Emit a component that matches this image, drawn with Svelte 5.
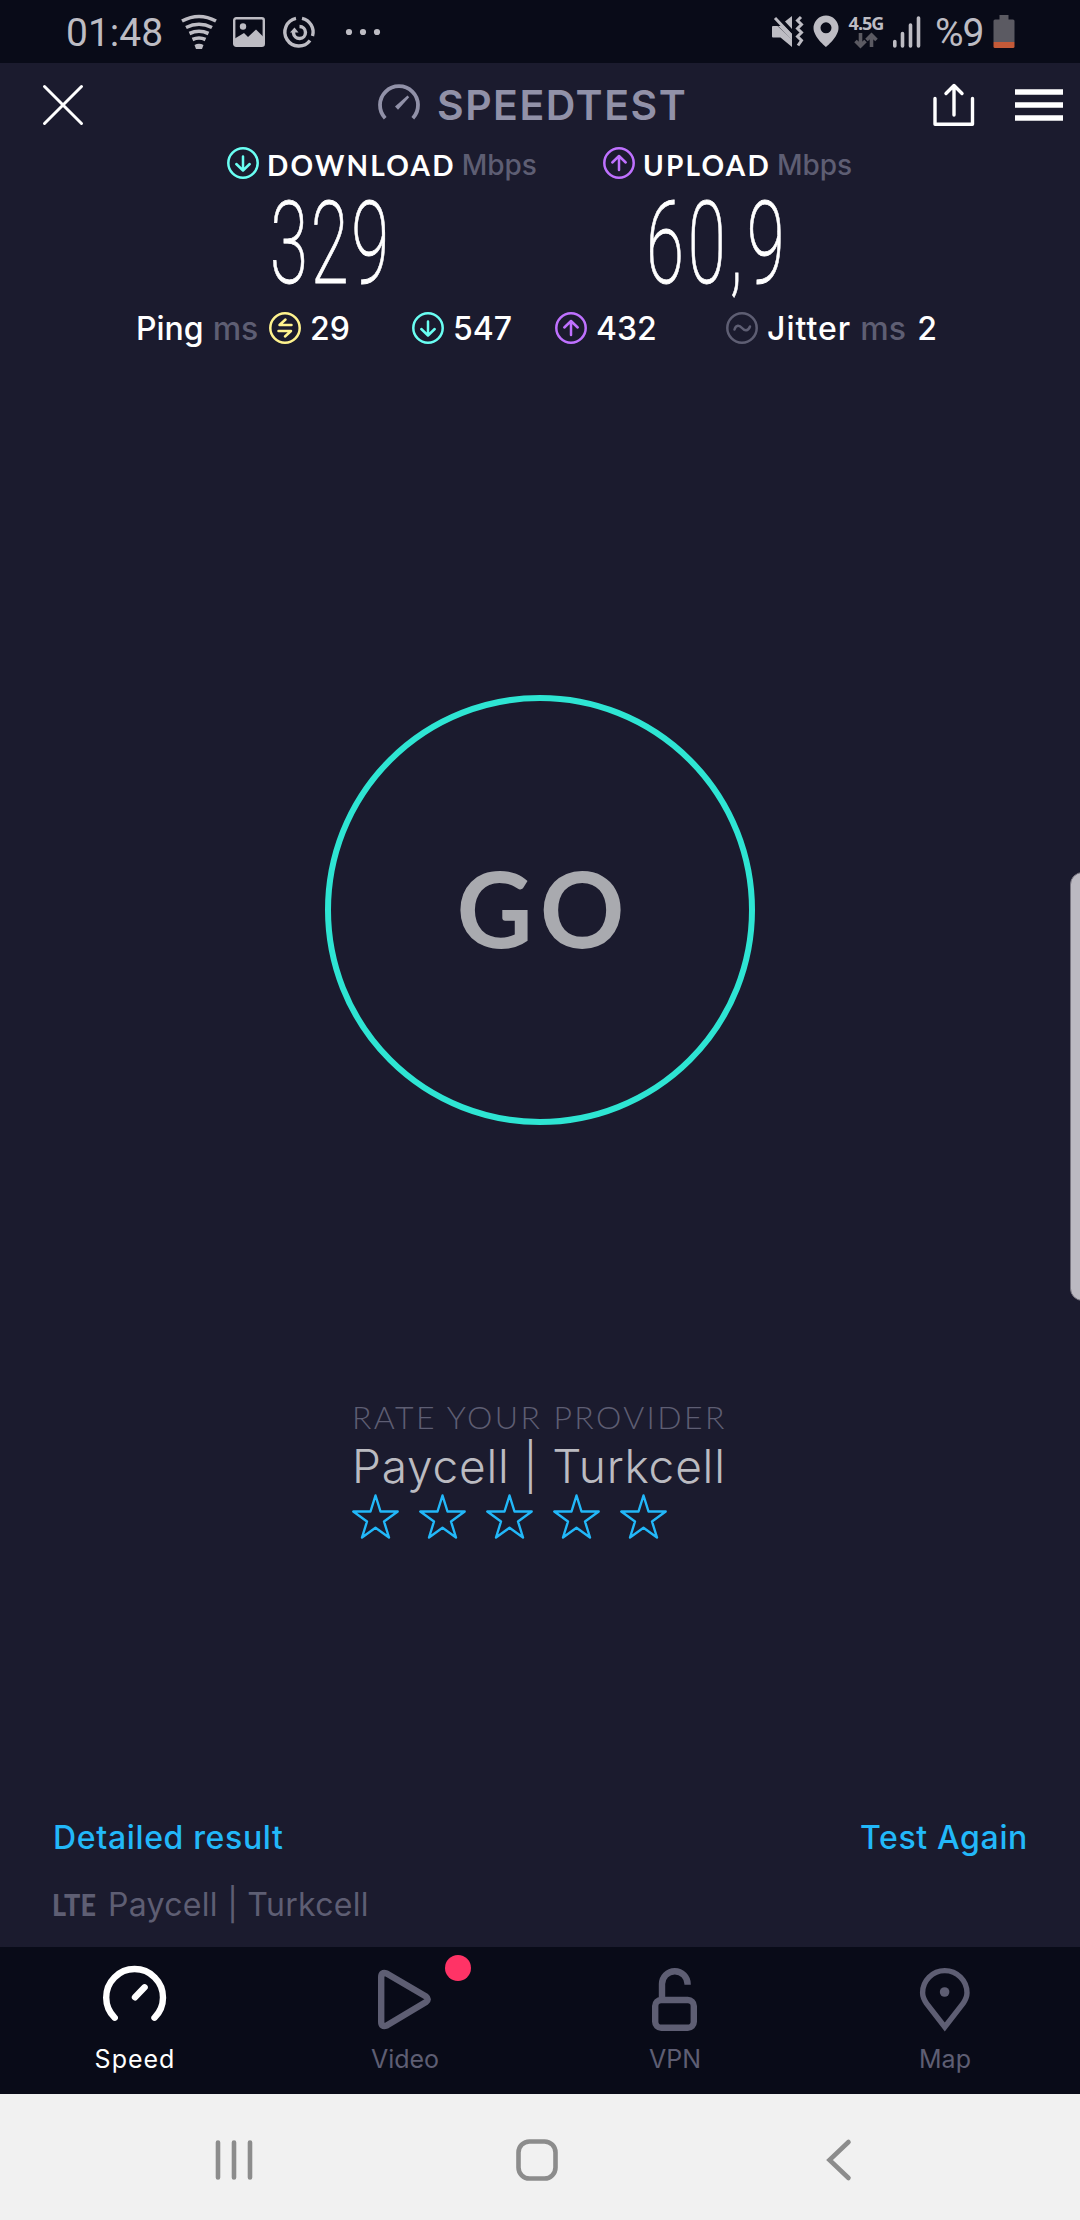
<script lang="ts">
  const stars = [1, 2, 3, 4, 5];

  const tabs = [
    { id: "speed", label: "Speed", active: true, badge: false },
    { id: "video", label: "Video", active: false, badge: true },
    { id: "vpn", label: "VPN", active: false, badge: false },
    { id: "map", label: "Map", active: false, badge: false },
  ];
</script>

{#snippet ring(kind: string)}
  <svg class="ring {kind}" viewBox="0 0 32 32">
    <circle cx="16" cy="16" r="14.7" />
    {#if kind === "down"}
      <path d="M16 9.500v13.500M9.300 17l6.700 6.500 6.700-6.500" />
    {:else if kind === "up"}
      <path d="M16 23V9M9.300 15.500L16 9l6.700 6.500" />
    {:else if kind === "ping"}
      <path d="M22.500 13H10.500l6-5.500M9.500 19H22l-6 5.500" />
    {:else}
      <path d="M8.500 17.500c1.500-5 5-4.500 7.500-1.500s6 3.500 8-1.500" />
    {/if}
  </svg>
{/snippet}

<div class="screen">
  <div class="status-bar">
    <span class="clock">01:48</span>
    <svg class="wifi" viewBox="0 0 36 34">
      <path d="M1 6Q18-3 35 6M5 12.500q13-6.500 26 0M8.500 18.500q9.500-4.500 19 0M11.500 24.500q6.500-3 13 0" />
      <path d="M13.500 30q4.500-2.500 9 0l-1.500 4h-6z" class="solid" />
    </svg>
    <svg class="photo" viewBox="0 0 32 30">
      <rect x="1.200" y="1.200" width="29.600" height="27.600" rx="2" />
      <circle cx="10" cy="9.500" r="3.200" />
      <path d="M1 22l10-6 4 4 8-7.500 8 8V29H1z" />
    </svg>
    <svg class="sync" viewBox="0 0 32 32">
      <path d="M13 2.300A14 14 0 1 0 27 24.500M19 2.300A14 14 0 0 1 29.500 20" />
      <path d="M16.500 10.500a6 6 0 1 1-6 6.500V15" />
      <path d="M7 16.500l4.500-5 4 5z" class="solid" />
    </svg>
    <svg class="more" viewBox="0 0 36 8">
      <circle cx="4" cy="4" r="3.100" /><circle cx="18" cy="4" r="3.100" /><circle cx="32" cy="4" r="3.100" />
    </svg>
    <div class="status-right">
      <svg class="mute" viewBox="0 0 32 33">
        <path d="M0 12q0-1 1-1h4.500L20 24.500V32L8.500 22.500H1q-1 0-1-1zM13 6.500L20 1v13z" class="solid" />
        <path d="M6 11h6l8 8v6z" class="solid" />
        <path d="M3 3l16 17M29 2l-3.500 3.500 4 4-4 4 4 4-4 4 4 4-3.500 5" />
      </svg>
      <svg class="pin" viewBox="0 0 26 33">
        <path fill-rule="evenodd" d="M13 .500A12.500 12.500 0 0 0 .500 13C.500 22 13 32 13 32s12.500-10 12.500-19A12.500 12.500 0 0 0 13 .500zM13 7.300a5.500 5.500 0 1 1 0 11 5.500 5.500 0 0 1 0-11z" />
      </svg>
      <div class="network">
        <span>4.5G</span>
        <svg viewBox="0 0 24 15">
          <path d="M6.500 0v12M1.500 8l5 5 5-5M17.500 14V2M12.500 7l5-5 5 5" />
        </svg>
      </div>
      <svg class="signal" viewBox="0 0 28 32">
        <path d="M1.800 25.500v4.500M9.500 17.500v12.500M17.500 9v21M25.500 2v28" />
      </svg>
      <span class="percent">%9</span>
      <svg class="battery" viewBox="0 0 22 33">
        <path d="M6.500 0h9v4.500H20q1.500 0 1.500 1.500V27H.500V6q0-1.500 1.500-1.500h4.500z" />
        <path d="M.500 27h21v4.500q0 1.500-1.500 1.500H2Q.500 33 .500 31.500z" class="charge" />
      </svg>
    </div>
  </div>

  <header class="app-header">
    <svg class="close" viewBox="0 0 40 40"><path d="M1.500 1.500l37 37M38.500 1.500l-37 37" /></svg>
    <div class="brand">
      <svg viewBox="0 0 42 36">
        <path d="M7.200 34.200A19 19 0 1 1 34.800 34.200" />
        <path d="M17 22.500L29.500 11.500l1.700 1.700L20 25.800z" class="needle" />
      </svg>
      <span>SPEEDTEST</span>
    </div>
    <svg class="share" viewBox="0 0 42 42">
      <path d="M2 14.500V40.300h37.500V14.500M21 31V2.500M13 9.500l8-8 8 8" />
    </svg>
    <svg class="menu" viewBox="0 0 48 32">
      <path d="M0 3h48M0 16h48M0 29h48" />
    </svg>
  </header>

  <section class="results">
    <div class="result download">
      <div class="result-label">
        {@render ring("down")}
        <strong>DOWNLOAD</strong>
        <span class="unit">Mbps</span>
      </div>
      <div class="result-value">329</div>
    </div>
    <div class="result upload">
      <div class="result-label">
        {@render ring("up")}
        <strong>UPLOAD</strong>
        <span class="unit">Mbps</span>
      </div>
      <div class="result-value decimal">60,9</div>
    </div>
  </section>

  <section class="latency">
    <div class="metric ping-label"><strong>Ping</strong><span class="unit">ms</span></div>
    <div class="metric idle">{@render ring("ping")}<strong>29</strong></div>
    <div class="metric loaded-down">{@render ring("down")}<strong>547</strong></div>
    <div class="metric loaded-up">{@render ring("up")}<strong>432</strong></div>
    <div class="metric jitter-metric">
      {@render ring("jitter")}<strong class="jitter-name">Jitter</strong><span class="unit">ms</span><strong>2</strong>
    </div>
  </section>

  <main class="stage">
    <button class="go"><span>GO</span></button>
    <div class="edge-handle"></div>
  </main>

  <section class="rating">
    <div class="rate-title">RATE YOUR PROVIDER</div>
    <div class="provider">Paycell | Turkcell</div>
    <div class="stars">
      {#each stars as star (star)}
        <svg viewBox="0 0 47 45">
          <path d="M23.500 1.500l5 16H45.700L32 27.500l5 16-13.500-9.700L10 43.500l5-16L1.300 17.500h17.200z" />
        </svg>
      {/each}
    </div>
  </section>

  <section class="actions">
    <span class="detail-link">Detailed result</span>
    <span class="again-link">Test Again</span>
  </section>

  <section class="connection">
    <span class="lte">LTE</span>
    <span class="carrier">Paycell | Turkcell</span>
  </section>

  <nav class="tab-bar">
    {#each tabs as tab (tab.id)}
      <div class="tab {tab.id}" class:active={tab.active}>
        <svg viewBox="0 0 70 70">
          {#if tab.id === "speed"}
            <path d="M14.700 56.700A28.400 28.400 0 1 1 54.500 56.700M35 36.300l9.600-10" />
          {:else if tab.id === "video"}
            <path d="M11.200 16V61q0 5.500 5.500 3.500L56 41q3.500-2.700 0-5.400L16.700 12.500q-5.500-2-5.500 3.500z" />
          {:else if tab.id === "vpn"}
            <path class="square" d="M22 37V23a12.800 12.800 0 0 1 25.600 0v.700" />
            <rect x="15.200" y="39" width="38.600" height="27.800" rx="6" />
          {:else}
            <path class="outline" d="M34.800 66L16.500 42.500C13.500 38 12.600 35 12.600 31.800a22.200 22.200 0 0 1 44.400 0c0 3.200-.900 6.200-3.900 10.700z" />
            <circle class="dot" cx="34.600" cy="31" r="4.800" />
          {/if}
        </svg>
        <span>{tab.label}</span>
        {#if tab.badge}<i class="badge"></i>{/if}
      </div>
    {/each}
  </nav>

  <div class="system-nav">
    <svg viewBox="0 0 46 46"><path class="recent" d="M7 5.500v35M23 5.500v35M39 5.500v35" /></svg>
    <svg viewBox="0 0 46 46"><rect x="4.500" y="4.500" width="37" height="37" rx="11" /></svg>
    <svg viewBox="0 0 46 46"><path d="M32.500 5l-19 18 19 18" /></svg>
  </div>
</div>

<style>
  :global(body) {
    margin: 0;
    background: #1b1b2e;
  }

  .screen {
    width: 1080px;
    height: 2220px;
    display: flex;
    flex-direction: column;
    overflow: hidden;
    background: #1b1b2e;
    color: #fff;
    font-family: Inter, "Open Sans", sans-serif;
    white-space: nowrap;
  }

  svg {
    display: block;
    flex: none;
    overflow: visible;
    fill: none;
    stroke: currentColor;
  }

  strong {
    font-weight: 500;
  }

  .unit {
    color: #5e5e73;
    font-weight: 500;
  }

  .status-bar {
    height: 63px;
    box-sizing: border-box;
    flex: none;
    display: flex;
    align-items: center;
    padding: 0 65px 0 66px;
    background: #090b18;
    color: #bdbcc3;
    font-family: Roboto, sans-serif;
  }

  .status-bar .solid {
    fill: currentColor;
    stroke: none;
  }

  .clock {
    width: 115px;
    font-size: 39px;
    padding-top: 3px;
  }

  .wifi {
    width: 36px;
    height: 34px;
    stroke-width: 3.6;
  }

  .photo {
    width: 32px;
    height: 30px;
    margin-left: 16px;
    stroke-width: 2.4;
  }

  .photo circle,
  .photo path {
    fill: currentColor;
    stroke: none;
  }

  .sync {
    width: 32px;
    height: 32px;
    margin-left: 18px;
    stroke-width: 3.4;
  }

  .more {
    width: 36px;
    height: 8px;
    margin-left: 30px;
    fill: currentColor;
    stroke: none;
  }

  .status-right {
    margin-left: auto;
    display: flex;
    align-items: center;
  }

  .mute {
    width: 32px;
    height: 33px;
    stroke-width: 3;
  }

  .pin {
    width: 26px;
    height: 33px;
    margin-left: 9px;
    fill: currentColor;
    stroke: none;
  }

  .network {
    width: 36px;
    margin-left: 9px;
    display: flex;
    flex-direction: column;
    align-items: center;
    gap: 2px;
    font-family: "Open Sans", sans-serif;
    font-size: 18px;
    font-weight: 700;
    line-height: 16px;
    letter-spacing: -1px;
  }

  .network svg {
    width: 24px;
    height: 15px;
    color: #5b5a62;
    stroke-width: 3.6;
  }

  .signal {
    width: 28px;
    height: 32px;
    margin-left: 9px;
    stroke-width: 3.6;
    stroke-linecap: round;
  }

  .percent {
    width: 59px;
    margin-left: 14px;
    padding-top: 3px;
    font-size: 39px;
    letter-spacing: -1px;
  }

  .battery {
    width: 22px;
    height: 33px;
    margin-left: -1px;
    fill: #5b5a62;
    stroke: none;
  }

  .charge {
    fill: #c45a38;
  }

  .app-header {
    height: 84px;
    flex: none;
    display: grid;
    grid-template-columns: 40px 1fr 42px 48px;
    column-gap: 40px;
    align-items: center;
    padding: 0 17px 0 43px;
    box-sizing: border-box;
  }

  .close {
    width: 40px;
    height: 40px;
    stroke-width: 3;
    stroke-linecap: round;
  }

  .brand {
    display: flex;
    align-items: center;
    padding-left: 255px;
    color: #9191a8;
    font-size: 41px;
    font-weight: 600;
    letter-spacing: 1.5px;
  }

  .brand svg {
    width: 42px;
    height: 36px;
    margin-right: 17px;
    margin-top: -6px;
    stroke-width: 3.8;
  }

  .brand .needle {
    fill: currentColor;
    stroke: none;
  }

  .share {
    width: 42px;
    height: 42px;
    stroke-width: 3.4;
    stroke-linecap: round;
    stroke-linejoin: round;
  }

  .menu {
    width: 48px;
    height: 32px;
    stroke-width: 5.6;
  }

  .ring {
    width: 32px;
    height: 32px;
    stroke-width: 2.5;
    stroke-linecap: round;
    stroke-linejoin: round;
  }

  .down {
    color: #6afff3;
  }

  .up {
    color: #bf71ff;
  }

  .ping {
    color: #fff38e;
  }

  .jitter {
    color: #5e5e73;
  }

  .results {
    height: 157px;
    flex: none;
    display: grid;
    grid-template-columns: 376px 1fr;
    padding-left: 227px;
  }

  .result-label {
    height: 32px;
    display: flex;
    align-items: center;
    font-size: 28px;
    line-height: 32px;
  }

  .result-label strong {
    margin: 3px 0 0 8px;
    font-family: Lato, sans-serif;
    font-weight: 700;
    letter-spacing: 2.2px;
  }

  .result-label .unit {
    margin: 3px 0 0 6px;
  }

  .result-value {
    width: 200px;
    margin: 15px 0 0 43px;
    font-family: Roboto, sans-serif;
    font-size: 115px;
    font-weight: 200;
    line-height: 100px;
    letter-spacing: 4.5px;
    transform: scaleX(0.6);
    transform-origin: left;
    -webkit-text-stroke: 0.8px #fff;
  }

  .result-value.decimal {
    letter-spacing: 6.5px;
  }

  .latency {
    height: 48px;
    flex: none;
    display: flex;
    align-items: center;
    padding-left: 136px;
    font-size: 32px;
  }

  .metric {
    display: flex;
    align-items: center;
    gap: 9px;
  }

  .ping-label {
    width: 133px;
  }

  .idle {
    width: 143px;
  }

  .loaded-down {
    width: 143px;
  }

  .loaded-up {
    width: 171px;
  }

  .jitter-name {
    letter-spacing: 1px;
  }

  .jitter-metric .unit {
    width: 48px;
  }

  .stage {
    position: relative;
    height: 1048px;
    flex: none;
    display: flex;
    justify-content: center;
    align-items: flex-start;
  }

  .go {
    width: 430px;
    height: 430px;
    margin-top: 343px;
    padding: 0 0 7px 8px;
    border: 6px solid #2ee5d3;
    border-radius: 50%;
    background: none;
    color: #a9aaaf;
    font-family: Lato, sans-serif;
    font-size: 105px;
    font-weight: 700;
    letter-spacing: 7px;
  }

  .edge-handle {
    position: absolute;
    top: 520px;
    right: -15px;
    width: 23px;
    height: 427px;
    border: 1px solid #77747f;
    border-radius: 14px;
    background: #bbb9c1;
  }

  .rating {
    height: 408px;
    flex: none;
    padding-left: 352px;
  }

  .rate-title {
    height: 38px;
    color: #5e5e73;
    font-family: Lato, sans-serif;
    font-size: 32px;
    font-weight: 300;
    line-height: 34px;
    letter-spacing: 2.4px;
  }

  .provider {
    height: 56px;
    color: #bbbbc1;
    font-size: 46px;
    font-weight: 300;
    line-height: 56px;
    letter-spacing: 0.8px;
  }

  .stars {
    display: flex;
    gap: 20px;
  }

  .stars svg {
    width: 47px;
    height: 45px;
    color: #22b8f9;
    stroke-width: 2.4;
    stroke-linejoin: round;
  }

  .actions {
    height: 58px;
    flex: none;
    display: flex;
    justify-content: space-between;
    align-items: center;
    padding: 0 52px 0 53px;
    color: #22b8f9;
    font-size: 32px;
    font-weight: 500;
    letter-spacing: 0.65px;
  }

  .connection {
    flex: 1;
    display: flex;
    align-items: center;
    padding: 0 0 5px 52px;
    color: #5e5e73;
    font-size: 32px;
    letter-spacing: 0.3px;
  }

  .lte {
    width: 56px;
    font-family: Lato, sans-serif;
    font-size: 31px;
    font-weight: 900;
    transform: scaleX(0.87);
    transform-origin: left;
  }

  .tab-bar {
    height: 147px;
    flex: none;
    display: grid;
    grid-template-columns: repeat(4, 270px);
    background: #090b18;
    color: #5e5e73;
  }

  .tab {
    position: relative;
    display: flex;
    flex-direction: column;
    align-items: center;
    padding-top: 14px;
    font-size: 25px;
    line-height: 30px;
  }

  .tab.active {
    color: #fff;
    letter-spacing: 1px;
  }

  .tab svg {
    width: 70px;
    height: 70px;
    margin-bottom: 13px;
    stroke-width: 6.4;
    stroke-linecap: round;
    stroke-linejoin: round;
  }

  .tab .square {
    stroke-linecap: butt;
  }

  .tab .outline {
    stroke-width: 5.4;
    stroke-linejoin: miter;
  }

  .tab .dot {
    fill: currentColor;
    stroke: none;
  }

  .badge {
    position: absolute;
    top: 8px;
    left: 175px;
    width: 26px;
    height: 26px;
    border-radius: 50%;
    background: #ff3366;
  }

  .system-nav {
    height: 126px;
    flex: none;
    display: flex;
    justify-content: space-between;
    align-items: center;
    box-sizing: border-box;
    padding: 6px 218px 0 211px;
    background: #f1f1f1;
    color: #8c8c8c;
  }

  .system-nav svg {
    width: 46px;
    height: 46px;
    stroke-width: 4.6;
    stroke-linecap: round;
  }
</style>
